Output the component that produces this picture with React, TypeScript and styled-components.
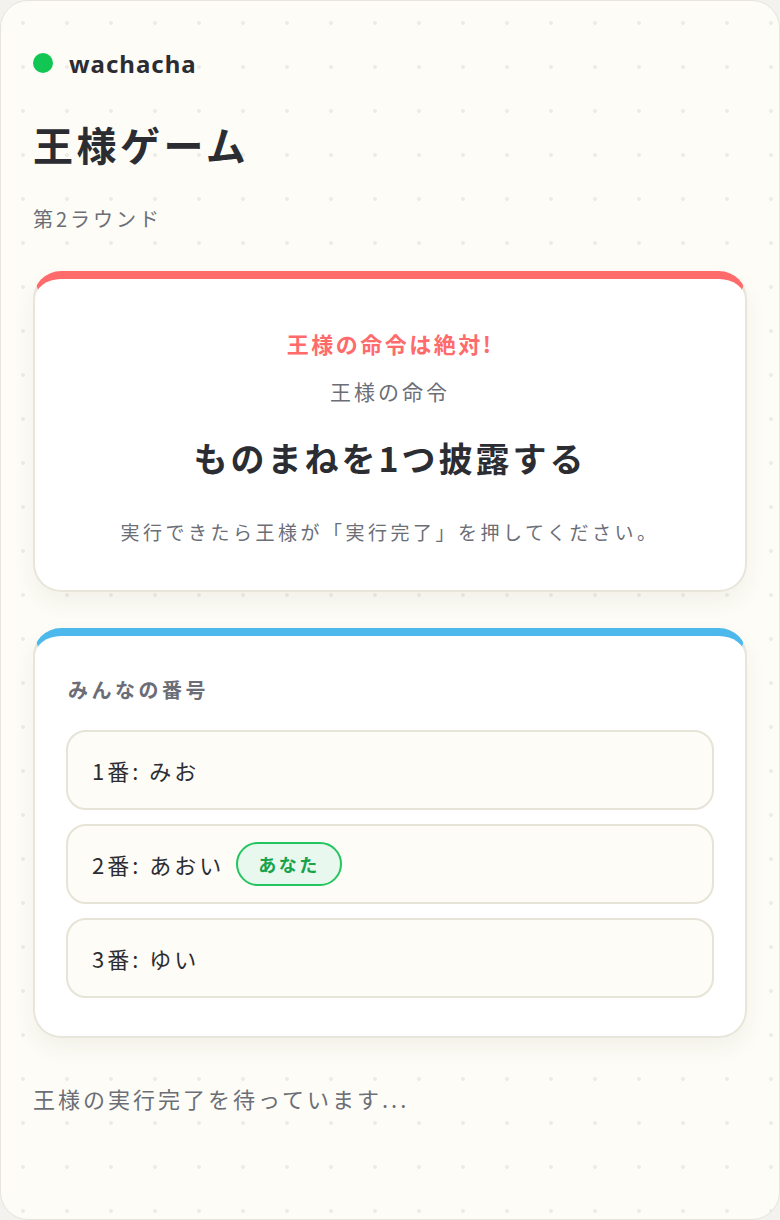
import styled, { createGlobalStyle } from "styled-components";

const GlobalStyle = createGlobalStyle`
  html, body {
    margin: 0;
    padding: 0;
    background: #f3f2ee;
  }
  body {
    font-family: "Noto Sans CJK JP", "Noto Sans", sans-serif;
    color: #2b2d33;
  }
  * {
    box-sizing: border-box;
  }
`;

const Screen = styled.div`
  width: 780px;
  min-height: 1220px;
  border: 1px solid #e6e4dc;
  border-radius: 28px;
  background-color: #fdfcf6;
  background-image: radial-gradient(circle, #eeede5 1.6px, transparent 2.2px);
  background-size: 44px 44px;
  padding: 44px 32px 60px;
  display: flex;
  flex-direction: column;
`;

const Brand = styled.div`
  display: flex;
  align-items: center;
  gap: 16px;
  height: 36px;
`;

const Dot = styled.span`
  width: 20px;
  height: 20px;
  border-radius: 50%;
  background: #12c653;
`;

const BrandName = styled.span`
  font-family: "Noto Sans", sans-serif;
  font-size: 24px;
  font-weight: 700;
  letter-spacing: 1px;
  color: #2b2d33;
`;

const Title = styled.h1`
  margin: 38px 0 0;
  font-size: 40px;
  line-height: 50px;
  font-weight: 700;
  letter-spacing: 3.5px;
`;

const Round = styled.div`
  margin-top: 36px;
  font-size: 20px;
  line-height: 28px;
  color: #6b6e76;
  letter-spacing: 3px;
`;

const Card = styled.section<{ $accent: string }>`
  background: #ffffff;
  border: 2px solid #e8e6da;
  border-top: 8px solid ${(p) => p.$accent};
  border-radius: 28px;
  box-shadow: 0 10px 22px rgba(60, 55, 30, 0.06);
`;

const OrderCard = styled(Card)`
  margin-top: 38px;
  padding: 49px 24px 44px;
  display: flex;
  flex-direction: column;
  align-items: center;
  text-align: center;
`;

const Alert = styled.div`
  font-size: 22px;
  line-height: 31px;
  font-weight: 700;
  letter-spacing: 2.5px;
  color: #ff6b6b;
`;

const OrderLabel = styled.div`
  margin-top: 17px;
  font-size: 21px;
  line-height: 30px;
  letter-spacing: 3px;
  color: #6b6e76;
`;

const Command = styled.div`
  margin-top: 28px;
  font-size: 34px;
  line-height: 48px;
  font-weight: 700;
  letter-spacing: 3px;
`;

const Note = styled.div`
  margin-top: 36px;
  font-size: 19px;
  line-height: 28px;
  color: #6b6e76;
  letter-spacing: 3.5px;
`;

const NumbersCard = styled(Card)`
  margin-top: 36px;
  padding: 39px 31px 38px;
`;

const SectionTitle = styled.div`
  margin-left: 2px;
  font-size: 20px;
  line-height: 30px;
  font-weight: 700;
  letter-spacing: 3.5px;
  color: #6b6e76;
`;

const List = styled.div`
  margin-top: 25px;
  display: flex;
  flex-direction: column;
  gap: 14px;
`;

const Row = styled.div`
  height: 80px;
  border: 2px solid #e6e4d6;
  border-radius: 20px;
  background: #fdfcf6;
  padding: 0 24px;
  display: flex;
  align-items: center;
  gap: 12px;
  font-size: 22px;
  letter-spacing: 3px;
  color: #2b2d33;
`;

const Badge = styled.span`
  height: 44px;
  padding: 0 20px;
  border: 2px solid #22c55e;
  border-radius: 22px;
  background: #e9f8ee;
  color: #16a34a;
  font-size: 18px;
  font-weight: 700;
  letter-spacing: 2.5px;
  display: flex;
  align-items: center;
`;

const Waiting = styled.div`
  margin-top: 44px;
  font-size: 22px;
  line-height: 33px;
  color: #6b6e76;
  letter-spacing: 3px;
`;

const players = [
  { no: 1, name: "みお", me: false },
  { no: 2, name: "あおい", me: true },
  { no: 3, name: "ゆい", me: false },
];

function App() {
  return (
    <>
      <GlobalStyle />
      <Screen>
        <Brand>
          <Dot />
          <BrandName>wachacha</BrandName>
        </Brand>
        <Title>王様ゲーム</Title>
        <Round>第2ラウンド</Round>

        <OrderCard $accent="#ff6b6b">
          <Alert>王様の命令は絶対!</Alert>
          <OrderLabel>王様の命令</OrderLabel>
          <Command>ものまねを1つ披露する</Command>
          <Note>実行できたら王様が「実行完了」を押してください。</Note>
        </OrderCard>

        <NumbersCard $accent="#4cb8ec">
          <SectionTitle>みんなの番号</SectionTitle>
          <List>
            {players.map((p) => (
              <Row key={p.no}>
                <span>
                  {p.no}番: {p.name}
                </span>
                {p.me && <Badge>あなた</Badge>}
              </Row>
            ))}
          </List>
        </NumbersCard>

        <Waiting>王様の実行完了を待っています...</Waiting>
      </Screen>
    </>
  );
}

export default App;
